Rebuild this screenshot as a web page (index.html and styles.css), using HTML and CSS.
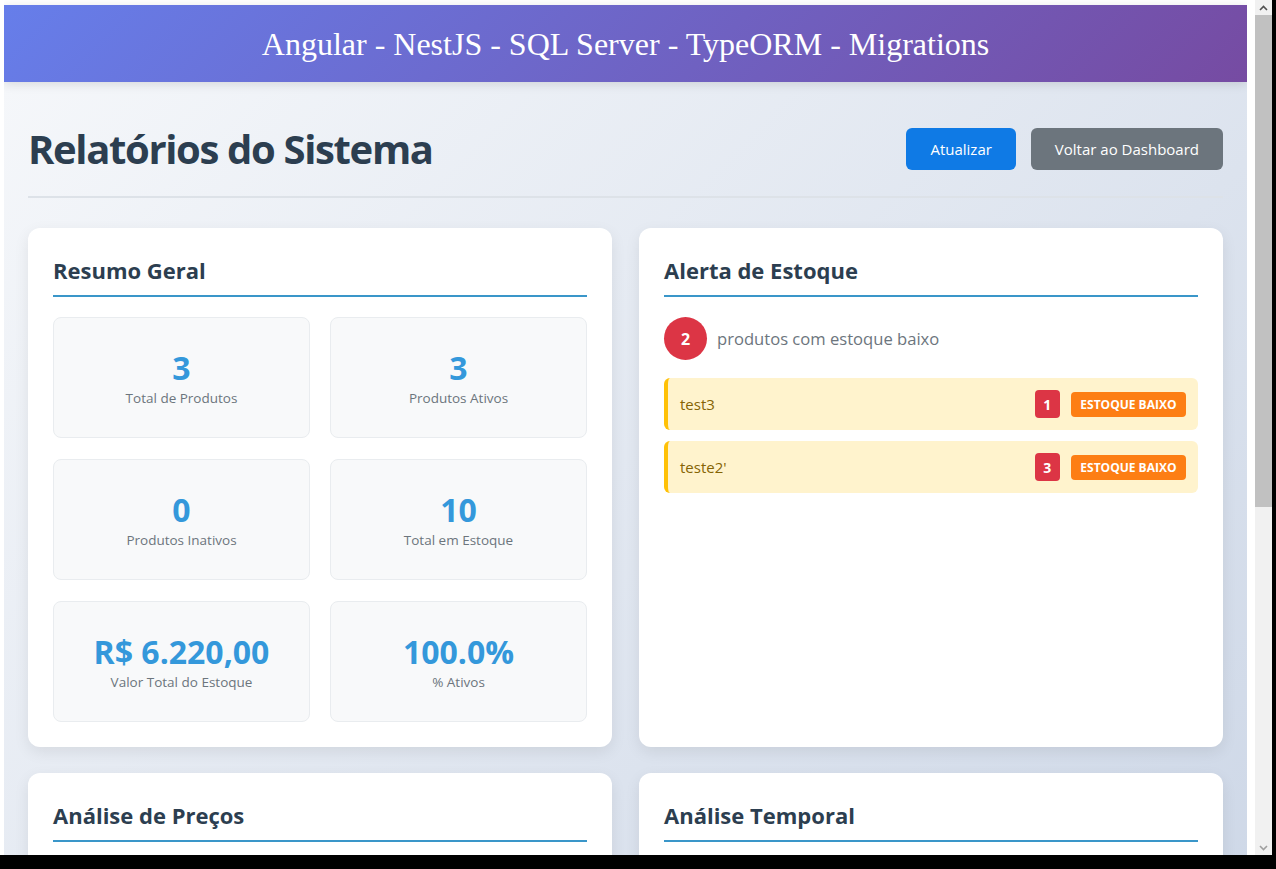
FILE: index.html
```html
<!DOCTYPE html>
<html lang="pt-BR">
<head>
<meta charset="utf-8">
<title>Relatórios do Sistema</title>
<link rel="stylesheet" href="styles.css">
</head>
<body>
<div class="frame">
  <div class="window">
    <div class="viewport">
      <header class="app-header">
        <h1>Angular - NestJS - SQL Server - TypeORM - Migrations</h1>
      </header>
      <main class="reports">
        <div class="reports-head">
          <h2>Relatórios do Sistema</h2>
          <div class="actions">
            <button class="btn btn-primary">Atualizar</button>
            <button class="btn btn-secondary">Voltar ao Dashboard</button>
          </div>
        </div>
        <div class="cards">
          <section class="card">
            <h3>Resumo Geral</h3>
            <div class="stats">
              <div class="stat"><div class="stat-value">3</div><div class="stat-label">Total de Produtos</div></div>
              <div class="stat"><div class="stat-value">3</div><div class="stat-label">Produtos Ativos</div></div>
              <div class="stat"><div class="stat-value">0</div><div class="stat-label">Produtos Inativos</div></div>
              <div class="stat"><div class="stat-value">10</div><div class="stat-label">Total em Estoque</div></div>
              <div class="stat"><div class="stat-value">R$ 6.220,00</div><div class="stat-label">Valor Total do Estoque</div></div>
              <div class="stat"><div class="stat-value">100.0%</div><div class="stat-label">% Ativos</div></div>
            </div>
          </section>
          <section class="card">
            <h3>Alerta de Estoque</h3>
            <div class="alert-summary">
              <span class="alert-count">2</span>
              <span class="alert-text">produtos com estoque baixo</span>
            </div>
            <div class="alert-list">
              <div class="alert-item">
                <span class="alert-name">test3</span>
                <div class="alert-badges"><span class="qty">1</span><span class="tag">ESTOQUE BAIXO</span></div>
              </div>
              <div class="alert-item">
                <span class="alert-name">teste2'</span>
                <div class="alert-badges"><span class="qty">3</span><span class="tag">ESTOQUE BAIXO</span></div>
              </div>
            </div>
          </section>
          <section class="card card-short">
            <h3>Análise de Preços</h3>
          </section>
          <section class="card card-short">
            <h3>Análise Temporal</h3>
          </section>
        </div>
      </main>
    </div>
    <div class="scrollbar">
      <div class="sb-arrow"><svg width="9" height="6" viewBox="0 0 9 6"><path d="M1 5 L4.5 1.5 L8 5" fill="none" stroke="#505050" stroke-width="1.6"/></svg></div>
      <div class="sb-thumb"></div>
      <div class="sb-track"></div>
      <div class="sb-arrow sb-down"><svg width="9" height="6" viewBox="0 0 9 6"><path d="M1 1 L4.5 4.5 L8 1" fill="none" stroke="#a0a0a0" stroke-width="1.6"/></svg></div>
    </div>
  </div>
</div>
</body>
</html>
```

FILE: styles.css
```css
* { box-sizing: border-box; }
html, body { margin: 0; padding: 0; }
body { background: #000; font-family: "Open Sans", "Noto Sans", sans-serif; }

.frame {
  width: 1276px;
  height: 869px;
  background: #000;
  overflow: hidden;
}
.window {
  display: flex;
  width: 1272px;
  height: 855px;
  background: #fff;
}
.viewport {
  width: 1243px;
  margin-left: 4px;
  margin-right: 8px;
  padding-top: 5px;
  overflow: hidden;
  flex: none;
}

.app-header {
  height: 77px;
  background: linear-gradient(135deg, #667eea 0%, #764ba2 100%);
  display: flex;
  align-items: center;
  justify-content: center;
  box-shadow: 0 2px 10px rgba(0, 0, 0, 0.12);
  position: relative;
  z-index: 1;
}
.app-header h1 {
  margin: 0;
  color: #fff;
  font-family: "Liberation Serif", "Times New Roman", serif;
  font-weight: normal;
  font-size: 32px;
  line-height: 1;
}

.reports {
  min-height: 1400px;
  padding: 24px 24px 0;
  background: linear-gradient(135deg, #f5f7fa 0%, #c3cfe2 100%);
}
.reports-head {
  display: flex;
  align-items: center;
  justify-content: space-between;
  padding: 19px 0 23px;
  border-bottom: 2px solid #dde2e8;
  margin-bottom: 30px;
}
.reports-head h2 {
  margin: 0;
  font-size: 40px;
  line-height: 48px;
  font-weight: 700;
  color: #2c3e50;
  letter-spacing: -1.35px;
}
.actions { display: flex; gap: 15px; }
.btn {
  height: 42px;
  padding: 0 24px;
  border: none;
  border-radius: 6px;
  color: #fff;
  font-family: inherit;
  font-size: 15px;
}
.btn-primary { background: #0f7ae5; }
.btn-secondary { background: #6c757d; }

.cards {
  display: grid;
  grid-template-columns: 1fr 1fr;
  gap: 26px 27px;
}
.card {
  background: #fff;
  border-radius: 12px;
  padding: 25px;
  box-shadow: 0 5px 15px rgba(0, 0, 0, 0.08);
}
.card-short { height: 200px; }
.card h3 {
  margin: 0 0 20px;
  font-size: 22px;
  line-height: 35px;
  font-weight: 700;
  color: #2c3e50;
  padding-bottom: 7px;
  border-bottom: 2px solid #3a96c9;
}

.stats {
  display: grid;
  grid-template-columns: 1fr 1fr;
  column-gap: 20px;
  row-gap: 21px;
}
.stat {
  height: 121px;
  padding: 30px 12px;
  background: #f8f9fa;
  border: 1px solid #e9ecef;
  border-radius: 8px;
  text-align: center;
}
.stat-value {
  font-size: 32px;
  line-height: 40px;
  font-weight: 700;
  color: #3498db;
  margin-bottom: 0;
}
.stat-label {
  font-size: 13.5px;
  line-height: 20px;
  color: #6c757d;
}

.alert-summary {
  display: flex;
  align-items: center;
  gap: 10px;
  margin-bottom: 18px;
}
.alert-count {
  width: 43px;
  height: 43px;
  border-radius: 50%;
  background: #dc3545;
  color: #fff;
  font-weight: 700;
  font-size: 16px;
  display: flex;
  align-items: center;
  justify-content: center;
}
.alert-text { font-size: 16.6px; color: #6c757d; }
.alert-list { display: flex; flex-direction: column; gap: 11px; }
.alert-item {
  height: 52px;
  display: flex;
  align-items: center;
  justify-content: space-between;
  padding: 0 12px;
  background: #fff3cd;
  border-left: 4px solid #ffc107;
  border-radius: 6px;
}
.alert-name { font-size: 15px; color: #856404; }
.alert-badges { display: flex; align-items: center; gap: 11px; }
.qty {
  width: 25px;
  height: 28px;
  border-radius: 4px;
  background: #dc3545;
  color: #fff;
  font-weight: 700;
  font-size: 14px;
  display: flex;
  align-items: center;
  justify-content: center;
}
.tag {
  height: 25px;
  padding: 0 9.5px;
  border-radius: 4px;
  background: #fd7e14;
  color: #fff;
  font-weight: 700;
  font-size: 12px;
  display: flex;
  align-items: center;
}

.scrollbar {
  width: 17px;
  flex: none;
  background: #f1f1f1;
  display: flex;
  flex-direction: column;
}
.sb-arrow {
  height: 15px;
  display: flex;
  align-items: center;
  justify-content: center;
  flex: none;
}
.sb-thumb { height: 492px; background: #c1c1c1; flex: none; }
.sb-track { flex: 1; }
```
